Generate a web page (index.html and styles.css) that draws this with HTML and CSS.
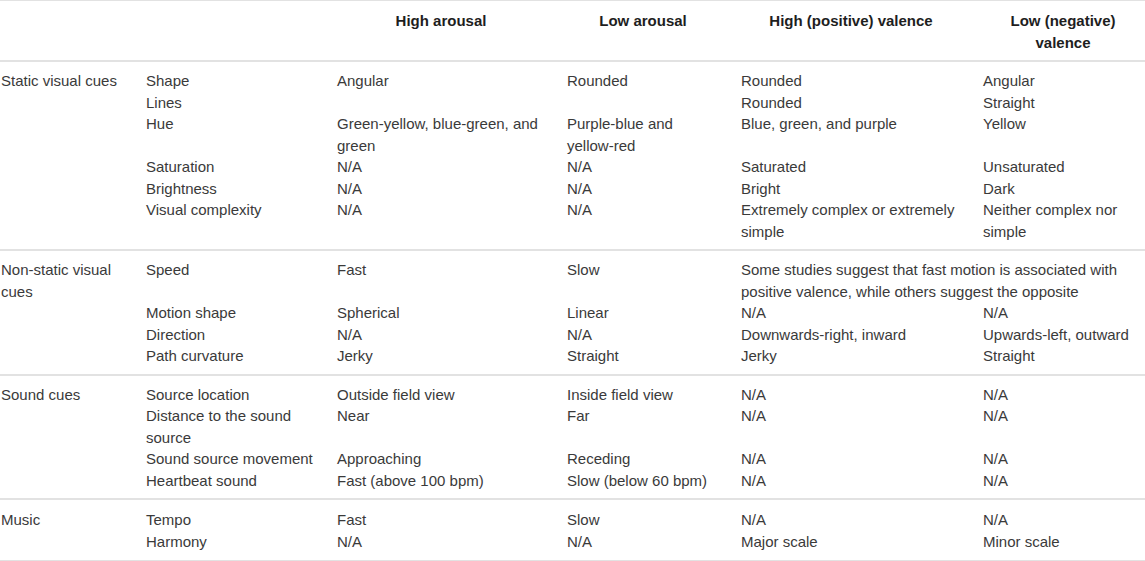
FILE: index.html
```html
<!DOCTYPE html>
<html>
  <head>
    <title>Affective cues</title>
    <link rel="stylesheet" href="styles.css">
  </head>
  <body>
    <table class="cues">
      <colgroup>
        <col class="c-group">
        <col class="c-cue">
        <col class="c-high-ar">
        <col class="c-low-ar">
        <col class="c-high-val">
        <col class="c-low-val">
      </colgroup>
      <thead>
        <tr>
          <th></th>
          <th></th>
          <th>High arousal</th>
          <th>Low arousal</th>
          <th>High (positive) valence</th>
          <th>Low (negative) valence</th>
        </tr>
      </thead>

      <tbody>
        <tr>
          <td rowspan="6" class="group">Static visual cues</td>
          <td>Shape</td><td>Angular</td><td>Rounded</td><td>Rounded</td><td>Angular</td>
        </tr>
        <tr>
          <td>Lines</td><td></td><td></td><td>Rounded</td><td>Straight</td>
        </tr>
        <tr>
          <td>Hue</td><td>Green-yellow, blue-green, and green</td><td>Purple-blue and <span class="nw">yellow-red</span></td><td>Blue, green, and purple</td><td>Yellow</td>
        </tr>
        <tr>
          <td>Saturation</td><td>N/A</td><td>N/A</td><td>Saturated</td><td>Unsaturated</td>
        </tr>
        <tr>
          <td>Brightness</td><td>N/A</td><td>N/A</td><td>Bright</td><td>Dark</td>
        </tr>
        <tr>
          <td>Visual complexity</td><td>N/A</td><td>N/A</td><td>Extremely complex or extremely simple</td><td>Neither complex nor simple</td>
        </tr>
      </tbody>

      <tbody>
        <tr>
          <td rowspan="4" class="group">Non-static visual cues</td>
          <td>Speed</td><td>Fast</td><td>Slow</td>
          <td colspan="2" class="wide">Some studies suggest that fast motion is associated with positive valence, while others suggest the opposite</td>
        </tr>
        <tr>
          <td>Motion shape</td><td>Spherical</td><td>Linear</td><td>N/A</td><td>N/A</td>
        </tr>
        <tr>
          <td>Direction</td><td>N/A</td><td>N/A</td><td>Downwards-right, inward</td><td>Upwards-left, outward</td>
        </tr>
        <tr>
          <td>Path curvature</td><td>Jerky</td><td>Straight</td><td>Jerky</td><td>Straight</td>
        </tr>
      </tbody>

      <tbody>
        <tr>
          <td rowspan="4" class="group">Sound cues</td>
          <td>Source location</td><td>Outside field view</td><td>Inside field view</td><td>N/A</td><td>N/A</td>
        </tr>
        <tr>
          <td>Distance to the sound source</td><td>Near</td><td>Far</td><td>N/A</td><td>N/A</td>
        </tr>
        <tr>
          <td>Sound source movement</td><td>Approaching</td><td>Receding</td><td>N/A</td><td>N/A</td>
        </tr>
        <tr>
          <td>Heartbeat sound</td><td>Fast (above 100 bpm)</td><td>Slow (below 60 bpm)</td><td>N/A</td><td>N/A</td>
        </tr>
      </tbody>

      <tbody class="music">
        <tr>
          <td rowspan="2" class="group">Music</td>
          <td>Tempo</td><td>Fast</td><td>Slow</td><td>N/A</td><td>N/A</td>
        </tr>
        <tr>
          <td>Harmony</td><td>N/A</td><td>N/A</td><td>Major scale</td><td>Minor scale</td>
        </tr>
      </tbody>
    </table>
  </body>
</html>
```

FILE: styles.css
```css
html,
body {
  margin: 0;
  overflow: hidden;
  background-color: #fff;
}
.cues {
  width: 1165px;
  table-layout: fixed;
  border-collapse: collapse;
  font-family: "Liberation Sans", Arial, sans-serif;
  font-size: 15px;
  line-height: 21.5px;
  color: #3a3a3a;
  border-top: 1px solid #e2e2e2;
}
.c-group { width: 146px; }
.c-cue { width: 191px; }
.c-high-ar { width: 230px; }
.c-low-ar { width: 174px; }
.c-high-val { width: 242px; }
.c-low-val { width: 182px; }

th {
  padding: 9px 22px 7px 0;
  text-align: center;
  vertical-align: top;
  font-weight: bold;
  color: #1e1e1e;
  border-bottom: 2px solid #e2e2e2;
}
td {
  padding: 0 12px 0 0;
  vertical-align: top;
  text-align: left;
}
td.group {
  padding-left: 1px;
}
td.wide {
  padding-right: 0;
}
.nw {
  white-space: nowrap;
}
tbody {
  border-bottom: 2px solid #e2e2e2;
}
tbody tr:first-child td {
  padding-top: 8px;
}
tbody tr:last-child td,
td.group {
  padding-bottom: 7px;
}
.music tr:first-child td {
  padding-top: 9px;
}
.music tr:last-child td,
.music td.group {
  padding-bottom: 8px;
}
```
